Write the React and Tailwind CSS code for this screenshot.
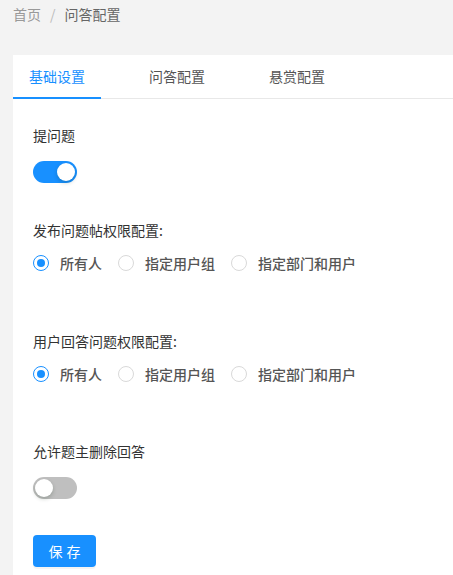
import React, { useState } from "react";

const font = { fontFamily: '"Noto Sans CJK SC", "Noto Sans", sans-serif' };

const Toggle = ({ on, setOn }) => (
  <div
    onClick={() => setOn(!on)}
    className={`relative w-[44px] h-[22px] rounded-full cursor-pointer ${
      on ? "bg-[#1890ff]" : "bg-[#bfbfbf]"
    }`}
  >
    <div
      className={`absolute top-[2px] w-[18px] h-[18px] rounded-full bg-white shadow-[0_2px_4px_rgba(0,35,11,0.2)] ${
        on ? "left-[24px]" : "left-[2px]"
      }`}
    ></div>
  </div>
);

const RadioGroup = ({ value, setValue }) => {
  const options = ["所有人", "指定用户组", "指定部门和用户"];
  return (
    <div className="flex items-center h-[22px]">
      {options.map((opt, i) => (
        <label
          key={opt}
          onClick={() => setValue(i)}
          className="flex items-center mr-[16px] cursor-pointer"
        >
          <span
            className={`flex items-center justify-center w-[16px] h-[16px] rounded-full border bg-white ${
              value == i ? "border-[#1890ff]" : "border-[#d9d9d9]"
            }`}
          >
            {value == i && (
              <span className="w-[8px] h-[8px] rounded-full bg-[#1890ff]"></span>
            )}
          </span>
          <span className="pl-[11px] text-[14px] text-[#555] font-medium">{opt}</span>
        </label>
      ))}
    </div>
  );
};

export default function App() {
  const [tab, setTab] = useState(0);
  const [ask, setAsk] = useState(true);
  const [del, setDel] = useState(false);
  const [postScope, setPostScope] = useState(0);
  const [answerScope, setAnswerScope] = useState(0);
  const tabs = ["基础设置", "问答配置", "悬赏配置"];

  return (
    <div style={font} className="min-h-screen bg-[#f3f3f3] overflow-hidden">
      {/* breadcrumb */}
      <div className="h-[55px] px-[13px] pt-[3px] text-[14px] leading-[22px]">
        <span className="text-[#999]">首页</span>
        <span className="text-[#bbb] mx-[9px]">/</span>
        <span className="text-[#666]">问答配置</span>
      </div>

      <div className="ml-[13px] bg-white min-h-[520px]">
        {/* tabs */}
        <div className="flex h-[44px] border-b border-[#e8e8e8]">
          {tabs.map((t, i) => (
            <div
              key={t}
              onClick={() => setTab(i)}
              className={`px-4 mr-8 flex items-center text-[14px] cursor-pointer border-b-2 -mb-px ${
                tab == i
                  ? "text-[#1890ff] border-[#1890ff]"
                  : "text-[#555] border-transparent"
              }`}
            >
              {t}
            </div>
          ))}
        </div>

        <div className="pl-5 pt-[25px] text-[14px] leading-[22px] text-[#333]">
          <div>提问题</div>
          <div className="mt-[15px]">
            <Toggle on={ask} setOn={setAsk} />
          </div>

          <div className="mt-[36px]">发布问题帖权限配置:</div>
          <div className="mt-[11px]">
            <RadioGroup value={postScope} setValue={setPostScope} />
          </div>

          <div className="mt-[56px]">用户回答问题权限配置:</div>
          <div className="mt-[11px]">
            <RadioGroup value={answerScope} setValue={setAnswerScope} />
          </div>

          <div className="mt-[55px]">允许题主删除回答</div>
          <div className="mt-[15px]">
            <Toggle on={del} setOn={setDel} />
          </div>

          <button className="mt-[36px] w-[63px] h-[32px] rounded-[4px] bg-[#1890ff] text-white text-[14px] tracking-[4px] pl-[4px] shadow-[0_2px_0_rgba(0,0,0,0.045)]">
            保存
          </button>
        </div>
      </div>
    </div>
  );
}
